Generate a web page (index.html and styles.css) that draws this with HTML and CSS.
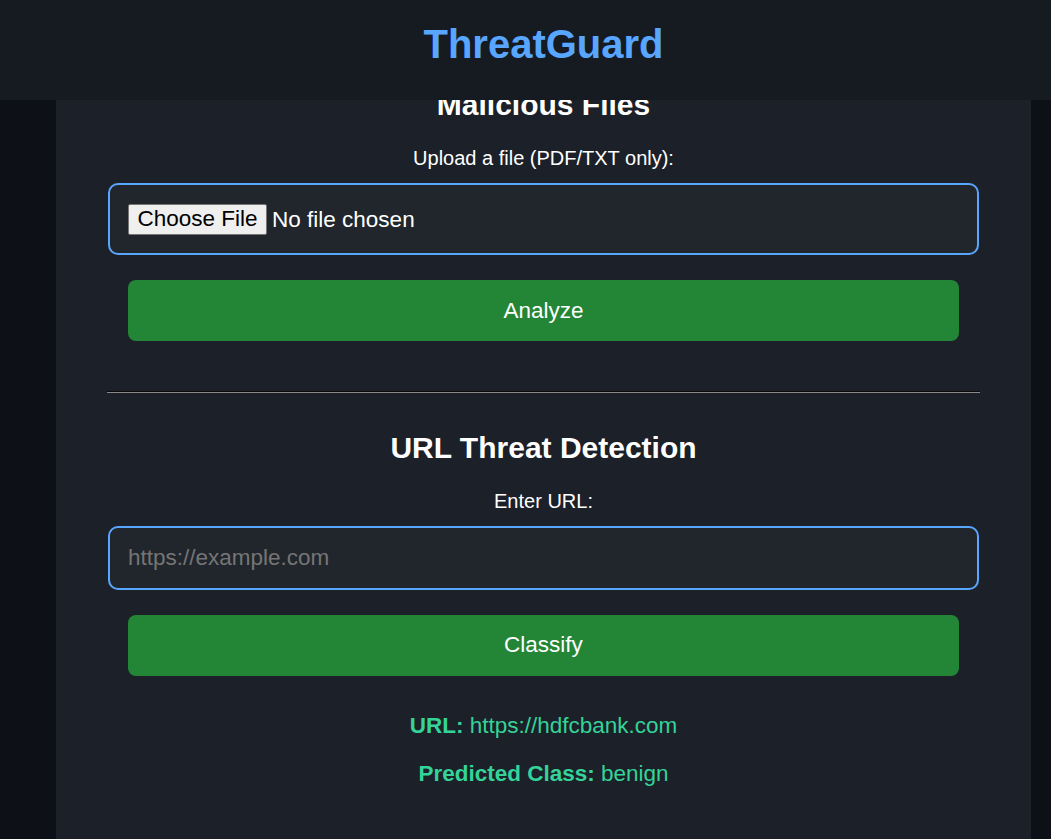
FILE: index.html
```html
<!DOCTYPE html>
<html lang="en">
<head>
<meta charset="utf-8">
<title>ThreatGuard</title>
<link rel="stylesheet" href="styles.css">
</head>
<body>
<header class="topbar">
  <h1 class="brand">ThreatGuard</h1>
</header>
<main class="card">
  <section class="tool">
    <h2 class="tool-title">Malicious Files</h2>
    <label class="tool-label" for="file">Upload a file (PDF/TXT only):</label>
    <input class="field field-file" id="file" type="file" accept=".pdf,.txt">
    <button class="action" type="button">Analyze</button>
  </section>
  <hr class="divider">
  <section class="tool">
    <h2 class="tool-title">URL Threat Detection</h2>
    <label class="tool-label" for="url">Enter URL:</label>
    <input class="field" id="url" type="text" placeholder="https://example.com">
    <button class="action" type="button">Classify</button>
    <div class="result">
      <p class="result-line"><strong>URL:</strong> https://hdfcbank.com</p>
      <p class="result-line"><strong>Predicted Class:</strong> benign</p>
    </div>
  </section>
</main>
</body>
</html>
```
FILE: styles.css
```css
* { box-sizing: border-box; }

html, body {
  margin: 0;
  padding: 0;
}

body {
  background: #0d1117;
  color: #ffffff;
  font-family: "Liberation Sans", Arial, sans-serif;
  font-size: 20px;
}

.topbar {
  position: fixed;
  top: 0;
  left: 0;
  right: 0;
  height: 100px;
  background: #161b22;
  padding: 22px 0 0 36px;
  z-index: 10;
  text-align: center;
}

.brand {
  margin: 0;
  font-size: 40px;
  font-weight: bold;
  color: #58a6ff;
}

.card {
  display: block;
  margin: 0 20px 0 56px;
  padding: 88px 51px 52px;
  background: #1c2028;
}

.tool {
  display: flex;
  flex-direction: column;
  align-items: stretch;
  text-align: center;
}

.tool-title {
  margin: 0 0 25px;
  font-size: 30px;
  font-weight: bold;
  color: #ffffff;
}

.tool-label {
  display: block;
  margin: 0 0 13px;
  font-size: 20px;
  color: #ffffff;
}

.field {
  margin: 0 1px;
  padding: 17px 18px;
  border: 2px solid #58a6ff;
  border-radius: 10px;
  background: #21262d;
  color: #ffffff;
  font-family: "Liberation Sans", Arial, sans-serif;
  font-size: 22.5px;
  text-align: left;
  outline: none;
}

.field::placeholder {
  color: #757575;
}

.field-file {
  padding: 18.5px 18px;
}

.field-file::file-selector-button {
  font-family: "Liberation Sans", Arial, sans-serif;
  font-size: 22.5px;
  color: #000000;
  background: #efefef;
  border: 1px solid #767676;
  border-radius: 2px;
  padding: 1.5px 8.5px;
  margin-right: 5px;
}

.action {
  margin: 25px 21px 0;
  padding: 17.5px 0;
  border: none;
  border-radius: 8px;
  background: #238636;
  color: #ffffff;
  font-family: "Liberation Sans", Arial, sans-serif;
  font-size: 22.5px;
  line-height: normal;
}

.divider {
  margin: 49.5px 0 38px;
  height: 2px;
  border: none;
  border-top: 1px solid #0a0a0a;
  border-bottom: 1px solid #8a8a8a;
}

.result {
  margin-top: 37px;
  display: flex;
  flex-direction: column;
  gap: 22px;
  color: #34d399;
  font-size: 22.5px;
}

.result-line {
  margin: 0;
}
```
